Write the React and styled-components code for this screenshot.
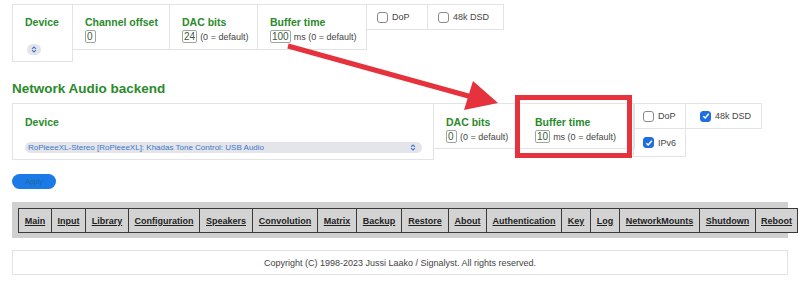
import React from 'react';
import styled, { createGlobalStyle } from 'styled-components';

const GlobalStyle = createGlobalStyle`
  body {
    margin: 0;
    background: #ffffff;
    font-family: "Liberation Sans", Arial, sans-serif;
    color: #333;
  }
`;

const Page = styled.div`
  position: relative;
  width: 800px;
  height: 293px;
  overflow: hidden;
  padding: 4px 0 0 12px;
  box-sizing: border-box;
`;

const Row = styled.div`
  display: flex;
  align-items: flex-start;
`;

const Cell = styled.div`
  position: relative;
  box-sizing: border-box;
  width: ${(p) => p.$w}px;
  height: ${(p) => p.$h}px;
  border: 1px solid #e3e3e3;
  margin-left: -1px;
  padding: ${(p) => p.$pad || '11px 0 0 12px'};
  &:first-child {
    margin-left: 0;
  }
`;

const CheckCellTop = styled(Cell)`
  display: flex;
  align-items: center;
  padding: 0 0 0 10px;
`;

const Title = styled.div`
  font-size: 10.5px;
  font-weight: bold;
  color: #2b8a2b;
  line-height: 13px;
  white-space: nowrap;
`;

const Field = styled.div`
  display: flex;
  align-items: center;
  font-size: 9px;
  color: #444;
  margin-top: 1px;
  white-space: nowrap;
`;

const NumBox = styled.span`
  display: inline-block;
  box-sizing: border-box;
  min-width: ${(p) => p.$w || 11}px;
  height: 13px;
  border: 1px solid #9aa99a;
  border-radius: 2px;
  font-size: 10px;
  line-height: 11px;
  padding: 0 1px;
  color: #3d5a3d;
  margin-right: 3px;
  overflow: hidden;
`;

const SelectPill = styled.div`
  display: flex;
  align-items: center;
  justify-content: ${(p) => (p.$small ? 'center' : 'space-between')};
  box-sizing: border-box;
  width: ${(p) => p.$w}px;
  height: 11px;
  margin-top: ${(p) => p.$mt}px;
  margin-left: ${(p) => p.$ml || 0}px;
  background: #e4e5ea;
  border-radius: 6px;
  padding: ${(p) => (p.$small ? '0' : '0 6px 0 3px')};
  font-size: 8px;
  color: #3b78c8;
  white-space: nowrap;
`;

const Chevrons = () => (
  <svg width="6" height="7" viewBox="0 0 6 7">
    <path d="M1 2.8 L3 1 L5 2.8 M1 4.2 L3 6 L5 4.2" fill="none" stroke="#3f78d0" strokeWidth="1.1" />
  </svg>
);

const CheckLabel = styled.label`
  display: flex;
  align-items: center;
  font-size: 9px;
  color: #444;
  gap: 4px;
`;

const Box = styled.span`
  display: inline-flex;
  align-items: center;
  justify-content: center;
  box-sizing: border-box;
  width: 11px;
  height: 11px;
  border-radius: 3px;
  border: 1px solid ${(p) => (p.$on ? '#1f6fe0' : '#8a8a8a')};
  background: ${(p) => (p.$on ? '#1f6fe0' : '#fff')};
`;

const Check = ({ on, label }) => (
  <CheckLabel>
    <Box $on={on}>
      {on && (
        <svg width="8" height="8" viewBox="0 0 8 8">
          <path d="M1.3 4.2 L3.2 6 L6.8 1.8" fill="none" stroke="#fff" strokeWidth="1.5" />
        </svg>
      )}
    </Box>
    {label}
  </CheckLabel>
);

const CheckGrid = styled.div`
  display: grid;
  grid-template-columns: 52px 76px;
  grid-template-rows: 25px 28px;
  margin-left: -1px;
`;

const CheckCell = styled.div`
  box-sizing: border-box;
  border: 1px solid #e3e3e3;
  margin: 0 0 -1px -1px;
  padding: 0 0 0 ${(p) => p.$pl || 9}px;
  display: flex;
  align-items: center;
`;

const Heading = styled.h2`
  margin: 18px 0 6px;
  font-size: 13.5px;
  line-height: 17px;
  color: #2b8a2b;
  font-weight: bold;
`;

const Highlight = styled.div`
  position: absolute;
  left: -2px;
  top: -9px;
  width: 117px;
  height: 63px;
  box-sizing: border-box;
  border: 5px solid #e5323d;
`;

const ApplyButton = styled.button`
  display: block;
  margin-top: 14px;
  width: 44px;
  height: 15px;
  border: none;
  border-radius: 8px;
  background: #1b7ae6;
  color: #1a6a9a;
  font-size: 7px;
  font-family: inherit;
  padding: 0;
`;

const NavBar = styled.div`
  margin-top: 13px;
  width: 776px;
  height: 36px;
  background: #d0d0d0;
  padding: 6px 0 0 6px;
  box-sizing: border-box;
  white-space: nowrap;
`;

const NavTable = styled.table`
  border-collapse: collapse;
  table-layout: fixed;
  width: 780px;
  background: #d3d3d3;
`;

const NavCell = styled.td`
  border: 1px solid #3a3a3a;
  height: 23px;
  padding: 0;
  text-align: center;
  font-size: 9px;
  font-weight: bold;
`;

const NavLink = styled.a`
  color: #222;
  text-decoration: underline;
`;

const Footer = styled.div`
  margin-top: 12px;
  width: 776px;
  height: 25px;
  box-sizing: border-box;
  border: 1px solid #e3e3e3;
  display: flex;
  align-items: center;
  justify-content: center;
  font-size: 9px;
  color: #444;
`;

const ArrowLayer = styled.svg`
  position: absolute;
  left: 0;
  top: 0;
  pointer-events: none;
`;

const navItems = [
  ['Main', 33], ['Input', 34], ['Library', 43], ['Configuration', 71], ['Speakers', 53],
  ['Convolution', 65], ['Matrix', 39], ['Backup', 45], ['Restore', 47], ['About', 38],
  ['Authentication', 75], ['Key', 29], ['Log', 29], ['NetworkMounts', 80], ['Shutdown', 56], ['Reboot', 42],
];

export default function App() {
  return (
    <>
      <GlobalStyle />
      <Page>
        <Row>
          <Cell $w={61} $h={58}>
            <Title>Device</Title>
            <SelectPill $small $w={14} $mt={15} $ml={2}>
              <Chevrons />
            </SelectPill>
          </Cell>
          <Cell $w={98} $h={46}>
            <Title>Channel offset</Title>
            <Field><NumBox>0</NumBox></Field>
          </Cell>
          <Cell $w={89} $h={46}>
            <Title>DAC bits</Title>
            <Field><NumBox>24</NumBox>(0 = default)</Field>
          </Cell>
          <Cell $w={110} $h={46}>
            <Title>Buffer time</Title>
            <Field><NumBox $w={16}>100</NumBox>ms (0 = default)</Field>
          </Cell>
          <CheckCellTop $w={62} $h={26}>
            <Check label="DoP" />
          </CheckCellTop>
          <CheckCellTop $w={77} $h={26}>
            <Check label="48k DSD" />
          </CheckCellTop>
        </Row>

        <Heading>Network Audio backend</Heading>

        <Row>
          <Cell $w={422} $h={57} $pad="12px 0 0 12px">
            <Title>Device</Title>
            <SelectPill $w={397} $mt={13}>
              RoPieeeXL-Stereo [RoPieeeXL]: Khadas Tone Control: USB Audio
              <Chevrons />
            </SelectPill>
          </Cell>
          <Cell $w={84} $h={46} $pad="12px 0 0 12px">
            <Title>DAC bits</Title>
            <Field><NumBox>0</NumBox>(0 = default)</Field>
          </Cell>
          <Cell $w={119} $h={46} $pad="12px 0 0 18px">
            <Title>Buffer time</Title>
            <Field><NumBox $w={15}>10</NumBox>ms (0 = default)</Field>
            <Highlight />
          </Cell>
          <CheckGrid>
            <CheckCell><Check label="DoP" /></CheckCell>
            <CheckCell $pl={14}><Check on label="48k DSD" /></CheckCell>
            <CheckCell><Check on label="IPv6" /></CheckCell>
          </CheckGrid>
        </Row>

        <ApplyButton>Apply</ApplyButton>

        <NavBar>
          <NavTable>
            <colgroup>
              {navItems.map(([name, w]) => <col key={name} style={{ width: w }} />)}
            </colgroup>
            <tbody>
              <tr>
                {navItems.map(([name]) => (
                  <NavCell key={name}><NavLink href="#">{name}</NavLink></NavCell>
                ))}
              </tr>
            </tbody>
          </NavTable>
        </NavBar>

        <Footer>Copyright (C) 1998-2023 Jussi Laako / Signalyst. All rights reserved.</Footer>

        <ArrowLayer width="800" height="293" viewBox="0 0 800 293">
          <line x1="288" y1="46" x2="472" y2="97" stroke="#e5323d" strokeWidth="5" />
          <polygon points="473,81 498,103 464,110" fill="#e5323d" />
        </ArrowLayer>
      </Page>
    </>
  );
}
